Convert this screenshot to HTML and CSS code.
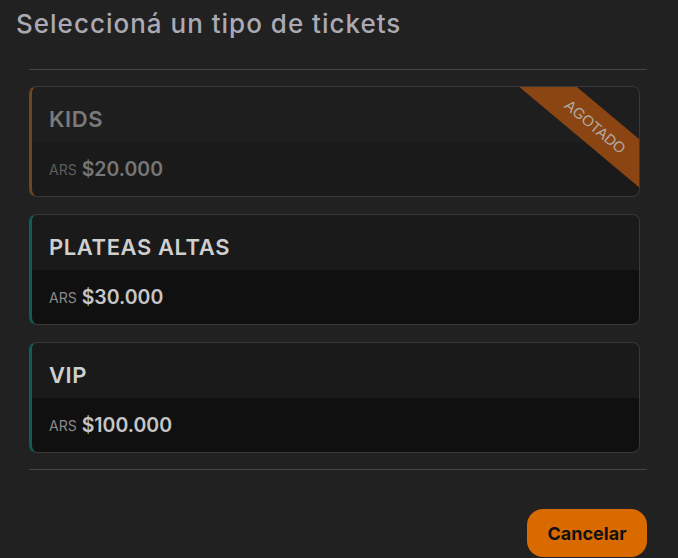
FILE: index.html
```html
<!DOCTYPE html>
<html lang="es">
<head>
    <meta charset="UTF-8">
    <meta name="viewport" content="width=device-width, initial-scale=1.0">
    <title>Tickets</title>
    <link rel="stylesheet" href="styles.css">
</head>
<body>
    <div class="modal">
        <h1 class="modal-title">Seleccioná un tipo de tickets</h1>
        <div class="modal-body">
            <hr class="divider">
            <div class="ticket-list">
                <div class="ticket sold-out">
                    <div class="ticket-name">KIDS</div>
                    <div class="ticket-price"><span class="currency">ARS</span> $20.000</div>
                    <div class="ribbon">AGOTADO</div>
                </div>
                <div class="ticket">
                    <div class="ticket-name">PLATEAS ALTAS</div>
                    <div class="ticket-price"><span class="currency">ARS</span> $30.000</div>
                </div>
                <div class="ticket">
                    <div class="ticket-name">VIP</div>
                    <div class="ticket-price"><span class="currency">ARS</span> $100.000</div>
                </div>
            </div>
            <hr class="divider">
            <div class="actions">
                <button class="btn-cancel">Cancelar</button>
            </div>
        </div>
    </div>
</body>
</html>
```

FILE: styles.css
```css
body {
    margin: 0;
    background: #212121;
    font-family: Inter, "Liberation Sans", Arial, sans-serif;
    overflow: hidden;
}
.modal {
    padding: 0 16px;
}
.modal-title {
    margin: 0;
    padding-top: 8px;
    font-size: 26px;
    font-weight: 500;
    letter-spacing: 1px;
    line-height: 32px;
    color: #abaab4;
}
.modal-body {
    padding: 0 15px 0 13px;
}
.divider {
    border: none;
    border-top: 1px solid #454545;
    margin: 0;
}
.modal-title + .modal-body .divider:first-child {
    margin-top: 29px;
}
.ticket-list {
    display: flex;
    flex-direction: column;
    gap: 17px;
    padding: 16px 7px 16px 0;
}
.ticket {
    position: relative;
    overflow: hidden;
    height: 109px;
    border: 1px solid #393939;
    border-left: 3px solid #0f5c5c;
    border-radius: 8px;
    background: #101010;
    display: flex;
    flex-direction: column;
}
.ticket-name {
    height: 55px;
    flex-shrink: 0;
    box-sizing: border-box;
    background: #1a1a1a;
    padding: 8px 17px 0;
    display: flex;
    align-items: center;
    font-size: 22px;
    font-weight: 600;
    letter-spacing: 0.6px;
    color: #cfcfcf;
}
.ticket-price {
    flex: 1;
    padding: 0 17px;
    display: flex;
    align-items: center;
    gap: 5px;
    font-size: 19.5px;
    font-weight: 600;
    color: #c6c6c6;
}
.currency {
    font-size: 14px;
    font-weight: normal;
    color: #8a8a8a;
}
.sold-out {
    border-left-color: #6c4720;
    background: #1a1a1a;
}
.sold-out .ticket-name {
    background: #1e1e1e;
    color: #7a7a7a;
}
.sold-out .ticket-price {
    color: #767676;
}
.sold-out .currency {
    color: #5e5e5e;
}
.ribbon {
    position: absolute;
    left: 458px;
    top: 25px;
    width: 220px;
    height: 37px;
    box-sizing: border-box;
    padding-right: 12px;
    line-height: 37px;
    text-align: center;
    background: #8a4513;
    color: #b3aba3;
    font-family: "Liberation Sans", Arial, sans-serif;
    font-size: 15px;
    transform: rotate(40deg);
}
.actions {
    display: flex;
    justify-content: flex-end;
    padding-top: 39px;
}
.btn-cancel {
    width: 120px;
    height: 48px;
    border: none;
    border-radius: 16px;
    background: #d96a00;
    color: #111;
    font-family: Inter, "Open Sans", sans-serif;
    font-size: 18px;
    font-weight: bold;
    cursor: pointer;
}
```
